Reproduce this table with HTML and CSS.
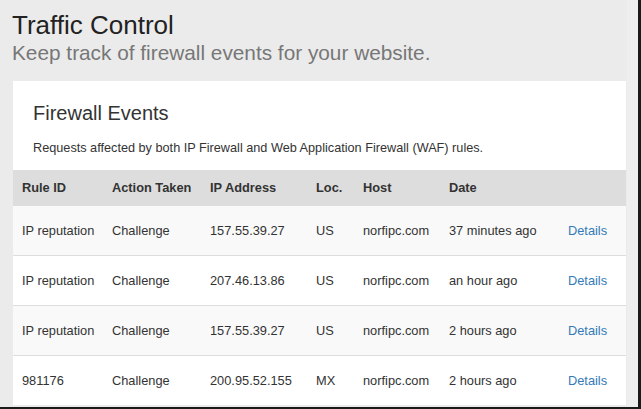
FILE: index.html
```html
<!DOCTYPE html>
<html>
<head>
<meta charset="utf-8">
<link rel="stylesheet" href="styles.css">
</head>
<body>
<div class="screen">
  <div class="content">
    <header class="page-head">
      <h1 class="title">Traffic Control</h1>
      <p class="subtitle">Keep track of firewall events for your website.</p>
    </header>
    <section class="card">
      <div class="card-head">
        <h2 class="card-title">Firewall Events</h2>
        <p class="card-desc">Requests affected by both IP Firewall and Web Application Firewall (WAF) rules.</p>
      </div>
      <table class="events">
        <colgroup>
          <col class="c-rule"><col class="c-action"><col class="c-ip"><col class="c-loc"><col class="c-host"><col class="c-date"><col class="c-link">
        </colgroup>
        <thead>
          <tr><th>Rule ID</th><th>Action Taken</th><th>IP Address</th><th>Loc.</th><th>Host</th><th>Date</th><th></th></tr>
        </thead>
        <tbody>
          <tr><td>IP reputation</td><td>Challenge</td><td>157.55.39.27</td><td>US</td><td>norfipc.com</td><td>37 minutes ago</td><td><a class="details" href="#">Details</a></td></tr>
          <tr><td>IP reputation</td><td>Challenge</td><td>207.46.13.86</td><td>US</td><td>norfipc.com</td><td>an hour ago</td><td><a class="details" href="#">Details</a></td></tr>
          <tr><td>IP reputation</td><td>Challenge</td><td>157.55.39.27</td><td>US</td><td>norfipc.com</td><td>2 hours ago</td><td><a class="details" href="#">Details</a></td></tr>
          <tr><td>981176</td><td>Challenge</td><td>200.95.52.155</td><td>MX</td><td>norfipc.com</td><td>2 hours ago</td><td><a class="details" href="#">Details</a></td></tr>
        </tbody>
      </table>
    </section>
  </div>
  <div class="track"></div>
</div>
</body>
</html>
```
FILE: styles.css
```css
html, body {
  margin: 0;
  padding: 0;
  background: #1a1a1a;
}
body {
  width: 641px;
  height: 409px;
  overflow: hidden;
  font-family: "Liberation Sans", Arial, sans-serif;
}
.screen {
  display: flex;
  width: 638px;
  height: 407px;
  overflow: hidden;
  background: #ebebeb;
}
.content {
  width: 627px;
  padding-left: 13px;
  box-sizing: border-box;
}
.track {
  width: 11px;
  background: #eeeeee;
}
.page-head {
  padding: 10px 0 0 0;
}
.title {
  margin: 0 0 0 -1px;
  font-size: 26px;
  line-height: 30px;
  font-weight: normal;
  color: #222;
}
.subtitle {
  margin: 0 0 0 -1px;
  font-size: 20.8px;
  line-height: 26px;
  color: #777;
}
.card {
  margin-top: 15px;
  background: #fff;
  width: 613px;
}
.card-head {
  padding: 20px 20px 13px 20px;
}
.card-title {
  margin: 0;
  font-size: 20px;
  line-height: 24px;
  font-weight: normal;
  color: #333;
}
.card-desc {
  margin: 15px 0 0 0;
  font-size: 12.7px;
  line-height: 17px;
  color: #333;
}
.events {
  width: 100%;
  border-collapse: collapse;
  font-size: 12.8px;
  color: #333;
}
.c-rule { width: 90px; }
.c-action { width: 98px; }
.c-ip { width: 106px; }
.c-loc { width: 47px; }
.c-host { width: 86px; }
.c-date { width: 119px; }
.events th {
  background: #dddddd;
  text-align: left;
  font-weight: bold;
  height: 35px;
  padding: 0 0 0 9px;
}
.events td {
  height: 49px;
  padding: 0 0 0 9px;
  border-top: 1px solid #dddddd;
}
.events tbody tr:nth-child(odd) td {
  background: #f9f9f9;
}
.details {
  color: #337ab7;
  text-decoration: none;
}
```
